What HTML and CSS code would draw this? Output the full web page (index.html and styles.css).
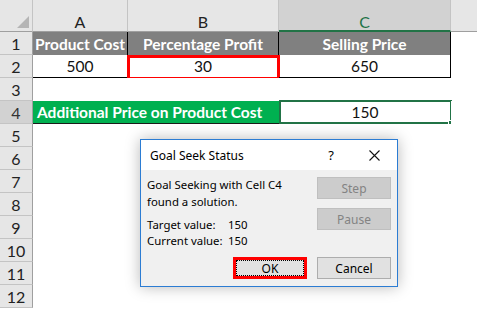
FILE: index.html
```html
<!DOCTYPE html>
<html lang="en">
<head>
    <meta charset="UTF-8">
    <title>Goal Seek Status</title>
    <link rel="stylesheet" href="styles.css">
</head>
<body>
    <div class="sheet">
        <!-- column headers -->
        <div class="corner">
            <svg width="12" height="12" viewBox="0 0 12 12"><polygon points="12,0 12,12 0,12" fill="#b5b5b5"/></svg>
        </div>
        <div class="col-head">A</div>
        <div class="col-head">B</div>
        <div class="col-head active">C</div>
        <div class="col-head rest"></div>

        <!-- row 1 -->
        <div class="row-head">1</div>
        <div class="cell title first">Product Cost</div>
        <div class="cell title">Percentage Profit</div>
        <div class="cell title">Selling Price</div>
        <div class="cell blank"></div>

        <!-- row 2 -->
        <div class="row-head">2</div>
        <div class="cell value first">500</div>
        <div class="cell value changing">30</div>
        <div class="cell value">650</div>
        <div class="cell blank"></div>

        <!-- row 3 -->
        <div class="row-head">3</div>
        <div class="cell blank span3"></div>
        <div class="cell blank"></div>

        <!-- row 4 -->
        <div class="row-head active">4</div>
        <div class="cell label">Additional Price on Product Cost</div>
        <div class="cell value selected">150</div>
        <div class="cell blank"></div>

        <div class="row-head">5</div><div class="cell blank span4"></div>
        <div class="row-head">6</div><div class="cell blank span4"></div>
        <div class="row-head">7</div><div class="cell blank span4"></div>
        <div class="row-head">8</div><div class="cell blank span4"></div>
        <div class="row-head">9</div><div class="cell blank span4"></div>
        <div class="row-head">10</div><div class="cell blank span4"></div>
        <div class="row-head">11</div><div class="cell blank span4"></div>
        <div class="row-head">12</div><div class="cell blank span4"></div>
    </div>

    <div class="dialog">
        <div class="dialog-title">
            <span class="caption">Goal Seek Status</span>
            <span class="help">?</span>
            <svg class="close" width="11" height="11" viewBox="0 0 11 11"><path d="M0.5 0.5 L10.5 10.5 M10.5 0.5 L0.5 10.5" stroke="#111" stroke-width="1.1"/></svg>
        </div>
        <div class="dialog-body">
            <div class="top">
                <div class="message">
                    <p class="lines">Goal Seeking with Cell C4<br>found a solution.</p>
                    <div class="values">
                        <span>Target value:</span><span>150</span>
                        <span>Current value:</span><span>150</span>
                    </div>
                </div>
                <div class="side-buttons">
                    <button class="btn" disabled>Step</button>
                    <button class="btn" disabled>Pause</button>
                </div>
            </div>
            <div class="bottom">
                <div class="ok-ring"><button class="btn ok"><span>OK</span></button></div>
                <button class="btn">Cancel</button>
            </div>
        </div>
    </div>
</body>
</html>
```

FILE: styles.css
```css
/* Page */
body {
    margin: 0;
    width: 477px;
    height: 309px;
    overflow: hidden;
    background-color: #fff;
    position: relative;
    font-family: Lato, "Liberation Sans", sans-serif;
}

/* Worksheet grid */
.sheet {
    display: grid;
    grid-template-columns: 33px 95px 151px 172px 1fr;
    grid-template-rows: 32px repeat(12, 23px);
}

.corner {
    background-color: #e6e6e6;
    border-right: 1px solid #c4c4c4;
    border-bottom: 1px solid #9f9f9f;
    box-sizing: border-box;
    display: flex;
    align-items: flex-end;
    justify-content: flex-end;
    padding: 0 3px 3px 0;
}

.col-head {
    background-color: #e6e6e6;
    border-right: 1px solid #c4c4c4;
    border-bottom: 1px solid #9f9f9f;
    box-sizing: border-box;
    display: flex;
    align-items: center;
    justify-content: center;
    padding-top: 12px;
    font-size: 16px;
    color: #222;
}

.col-head.active {
    background-color: #d2d2d2;
    border-bottom: 2px solid #217346;
    color: #217346;
}

.col-head.rest {
    border-right: none;
}

.row-head {
    background-color: #e6e6e6;
    border-right: 1px solid #9f9f9f;
    border-bottom: 1px solid #c4c4c4;
    box-sizing: border-box;
    display: flex;
    align-items: center;
    justify-content: center;
    font-size: 16px;
    color: #222;
}

.row-head.active {
    background-color: #d2d2d2;
    color: #333;
}

/* Cells */
.cell {
    box-sizing: border-box;
    display: flex;
    align-items: center;
    justify-content: center;
    font-size: 15.5px;
    color: #111;
    position: relative;
    white-space: nowrap;
}

.cell.blank {
    background-color: #fff;
}

.span3 { grid-column: span 3; }
.span4 { grid-column: span 4; }

.cell.title {
    background-color: #808080;
    color: #fff;
    font-weight: bold;
    border-right: 1px solid #000;
}

.cell.value {
    border-right: 1px solid #000;
    border-bottom: 1px solid #000;
}

.cell.changing::after {
    content: '';
    position: absolute;
    top: 0;
    left: -1px;
    right: -2px;
    bottom: -3px;
    border: 3px solid #ff0000;
}

.cell.label {
    grid-column: span 2;
    background-color: #00b050;
    color: #fff;
    font-weight: bold;
    justify-content: flex-start;
    padding-left: 4px;
    border-bottom: 1px solid #1b1b1b;
}

.cell.selected {
    border: none;
    border-bottom: 1px solid #1b1b1b;
}

.cell.selected::before {
    content: '';
    position: absolute;
    top: -1px;
    left: 0;
    right: -1px;
    bottom: -1px;
    border: 2px solid #217346;
}

.cell.selected::after {
    content: '';
    position: absolute;
    right: -4px;
    bottom: -4px;
    width: 5px;
    height: 5px;
    background-color: #217346;
    border: 1px solid #fff;
}

/* Goal Seek dialog */
.dialog {
    position: absolute;
    left: 140px;
    top: 139px;
    width: 258px;
    height: 148px;
    box-sizing: border-box;
    border: 1px solid #2b7cd3;
    background-color: #f0f0f0;
    box-shadow: 0 0 14px rgba(0, 0, 0, 0.28);
    font-family: "Noto Sans", "Liberation Sans", sans-serif;
    font-size: 11.4px;
    color: #000;
    display: flex;
    flex-direction: column;
    white-space: nowrap;
}

.dialog-title {
    height: 30px;
    background-color: #fff;
    display: flex;
    align-items: center;
    padding-left: 9px;
    padding-right: 17px;
    font-size: 12px;
}

.caption {
    flex: 1;
}

.help {
    font-size: 13px;
    margin-right: 35px;
}

.dialog-body {
    flex: 1;
    display: flex;
    flex-direction: column;
    justify-content: space-between;
    padding: 7px 6px 7px 6px;
}

.top {
    display: flex;
    justify-content: space-between;
}

.message {
    flex: 1;
}

.lines {
    margin: -1px 0 0 0;
    line-height: 17px;
}

.values {
    display: grid;
    grid-template-columns: 81px auto;
    line-height: 16px;
    margin-top: 7px;
}

.side-buttons {
    display: flex;
    flex-direction: column;
    gap: 9px;
}

.bottom {
    display: flex;
    justify-content: flex-end;
    align-items: center;
    gap: 10px;
}

.btn {
    width: 74px;
    height: 22px;
    box-sizing: border-box;
    margin: 0;
    padding: 0;
    border: 1px solid #adadad;
    background-color: #e1e1e1;
    font-family: "Noto Sans", "Liberation Sans", sans-serif;
    font-size: 12px;
    color: #000;
}

.btn:disabled {
    background-color: #cccccc;
    border-color: #bfbfbf;
    color: #838383;
}

.ok-ring {
    border: 3px solid #ff0000;
}

.ok-ring .btn {
    width: 68px;
    height: 16px;
    border: 1px dotted #000;
    display: flex;
    align-items: center;
    justify-content: center;
}
```
